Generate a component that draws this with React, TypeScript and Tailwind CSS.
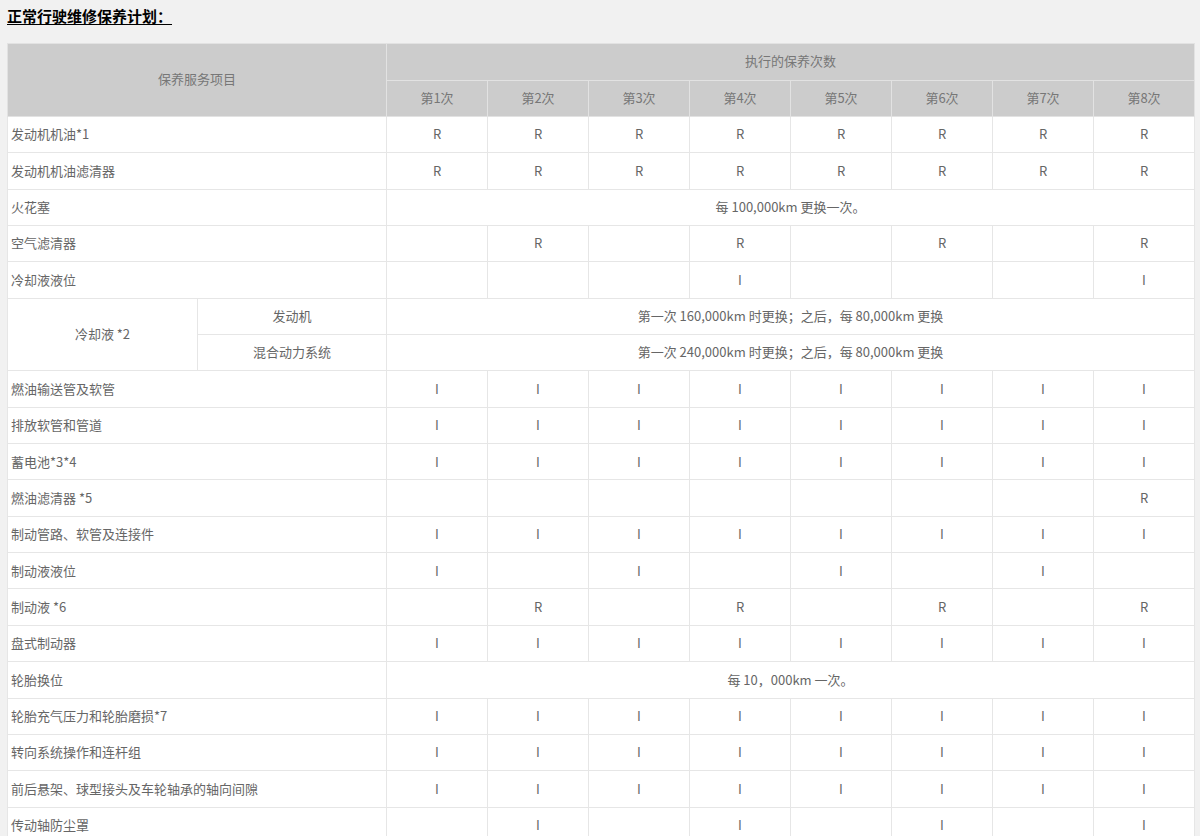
const rounds = ["第1次", "第2次", "第3次", "第4次", "第5次", "第6次", "第7次", "第8次"];

type Row =
  | { name: string; cells: string[] }
  | { name: string; span: string };

const all = (v: string) => Array(8).fill(v);
const odd = (v: string) => [v, "", v, "", v, "", v, ""];
const even = (v: string) => ["", v, "", v, "", v, "", v];

const before: Row[] = [
  { name: "发动机机油*1", cells: all("R") },
  { name: "发动机机油滤清器", cells: all("R") },
  { name: "火花塞", span: "每 100,000km 更换一次。" },
  { name: "空气滤清器", cells: even("R") },
  { name: "冷却液液位", cells: ["", "", "", "I", "", "", "", "I"] },
];

const after: Row[] = [
  { name: "燃油输送管及软管", cells: all("I") },
  { name: "排放软管和管道", cells: all("I") },
  { name: "蓄电池*3*4", cells: all("I") },
  { name: "燃油滤清器 *5", cells: ["", "", "", "", "", "", "", "R"] },
  { name: "制动管路、软管及连接件", cells: all("I") },
  { name: "制动液液位", cells: odd("I") },
  { name: "制动液 *6", cells: even("R") },
  { name: "盘式制动器", cells: all("I") },
  { name: "轮胎换位", span: "每 10，000km 一次。" },
  { name: "轮胎充气压力和轮胎磨损*7", cells: all("I") },
  { name: "转向系统操作和连杆组", cells: all("I") },
  { name: "前后悬架、球型接头及车轮轴承的轴向间隙", cells: all("I") },
  { name: "传动轴防尘罩", cells: even("I") },
];

const td = "border border-[#e6e6e6] pb-[1px] text-center align-middle";
const rowH = "h-[36.35px]";

const BodyRow = ({ row }: { row: Row }) => (
  <tr className={rowH}>
    <td colSpan={2} className="border border-[#e6e6e6] pb-[1px] pl-[3px] text-left align-middle">
      {row.name}
    </td>
    {"span" in row ? (
      <td colSpan={8} className={td}>
        {row.span}
      </td>
    ) : (
      row.cells.map((c, i) => (
        <td key={i} className={td}>
          {c}
        </td>
      ))
    )}
  </tr>
);

export default function App() {
  return (
    <div
      className="min-h-screen w-full bg-[#f1f1f1] px-[7px] pt-[6px] text-[13px] text-[#666]"
      style={{ fontFamily: '"Microsoft YaHei", "Noto Sans CJK SC", sans-serif' }}
    >
      <h1 className="text-[15px] font-bold leading-[20px] text-black underline underline-offset-2">
        正常行驶维修保养计划：
      </h1>

      <table className="mt-[17px] w-[1187px] table-fixed border-collapse bg-white">
        <colgroup>
          <col className="w-[190px]" />
          <col className="w-[189px]" />
          {rounds.map((r) => (
            <col key={r} className="w-[101px]" />
          ))}
        </colgroup>
        <thead className="bg-[#cccccc] text-[#777]">
          <tr className="h-[36.5px]">
            <th rowSpan={2} colSpan={2} className="border border-[#e2e2e2] pb-[2px] font-normal">
              保养服务项目
            </th>
            <th colSpan={8} className="border border-[#e2e2e2] pb-[2px] font-normal">
              执行的保养次数
            </th>
          </tr>
          <tr className="h-[36.5px]">
            {rounds.map((r) => (
              <th key={r} className="border border-[#e2e2e2] pb-[2px] font-normal">
                {r}
              </th>
            ))}
          </tr>
        </thead>
        <tbody>
          {before.map((r) => (
            <BodyRow key={r.name} row={r} />
          ))}
          <tr className={rowH}>
            <td rowSpan={2} className={td}>
              冷却液 *2
            </td>
            <td className={td}>发动机</td>
            <td colSpan={8} className={td}>
              第一次 160,000km 时更换；之后，每 80,000km 更换
            </td>
          </tr>
          <tr className={rowH}>
            <td className={td}>混合动力系统</td>
            <td colSpan={8} className={td}>
              第一次 240,000km 时更换；之后，每 80,000km 更换
            </td>
          </tr>
          {after.map((r) => (
            <BodyRow key={r.name} row={r} />
          ))}
        </tbody>
      </table>
    </div>
  );
}
